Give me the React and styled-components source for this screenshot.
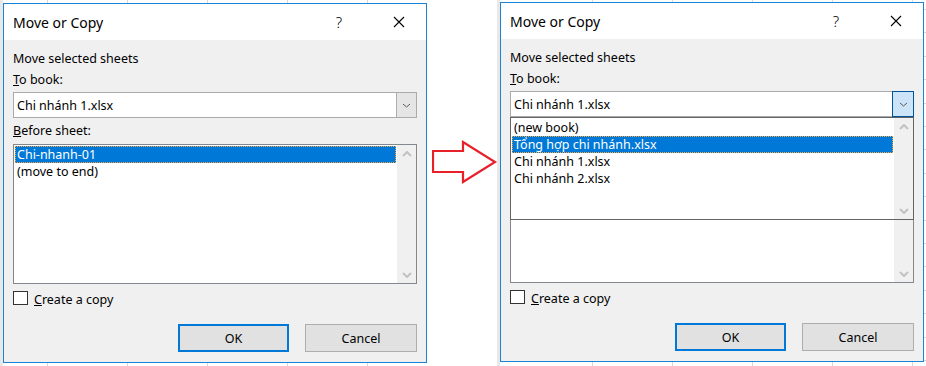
import React from "react";
import styled, { createGlobalStyle } from "styled-components";

const GlobalStyle = createGlobalStyle`
  body {
    margin: 0;
    background: #ffffff;
    font-family: "Noto Sans", "Liberation Sans", sans-serif;
  }
`;

const Page = styled.div`
  display: flex;
  width: 926px;
  height: 366px;
  overflow: hidden;
  background: #ffffff;
`;

// the strip of Excel grid that shows behind each dialog
const Shot = styled.div`
  width: ${(p) => p.$width}px;
  height: 366px;
  padding: ${(p) => p.$top}px 0 0 3px;
  box-sizing: border-box;
  background-color: #ffffff;
  background-image:
    repeating-linear-gradient(to right, transparent 0 47px, #d8d8d8 47px 48px, transparent 48px 80px),
    repeating-linear-gradient(to bottom, transparent 0 9px, #d8d8d8 9px 10px, transparent 10px 23.4px);
  background-position: ${(p) => p.$gx}px 0, 0 0;
  box-shadow: ${(p) => (p.$edge ? "inset 3px 0 0 #e8e8e8" : "none")};
`;

const Gap = styled.div`
  width: 70px;
  padding: 140px 0 0 5px;
  box-sizing: border-box;
`;

const Dialog = styled.div`
  width: 424px;
  border: 1px solid #1883d7;
  background: #f0f0f0;
  box-sizing: border-box;
  display: flex;
  flex-direction: column;
  color: #000;
`;

const TitleBar = styled.div`
  height: 36px;
  background: #ffffff;
  display: flex;
  align-items: center;
  padding: 0 17px 0 9px;
  font-size: 14px;
`;

const Title = styled.div`
  flex: 1;
`;

const TitleButton = styled.div`
  width: 20px;
  height: 20px;
  display: flex;
  align-items: center;
  justify-content: center;
  font-size: 15px;
  font-weight: 300;
  margin-left: ${(p) => p.$gap || 0}px;
`;

const Body = styled.div`
  padding: 10px 9px 10px 9px;
  font-size: 12.5px;
  display: flex;
  flex-direction: column;
`;

const Label = styled.div`
  height: 16px;
  line-height: 18px;
  margin-top: ${(p) => p.$mt || 0}px;
  white-space: nowrap;
  visibility: ${(p) => (p.$hidden ? "hidden" : "visible")};
`;

const ComboWrap = styled.div`
  position: relative;
  margin-top: 5px;
  z-index: 2;
`;

const Combo = styled.div`
  height: 26px;
  box-sizing: border-box;
  border: 1px solid #ababab;
  background: #ffffff;
  display: flex;
  align-items: stretch;
`;

const ComboText = styled.div`
  flex: 1;
  padding-left: 3px;
  line-height: 25px;
`;

const DropButton = styled.div`
  width: 20px;
  display: flex;
  align-items: center;
  justify-content: center;
  box-sizing: border-box;
  background: ${(p) => (p.$active ? "#cce4f7" : "#e5e5e5")};
  border-left: 1px solid #adadad;
  ${(p) =>
    p.$active &&
    `
    margin: -1px -1px -1px 0;
    width: 22px;
    border: 1px solid #005499;
  `}
`;

const DropList = styled.div`
  position: absolute;
  top: 26px;
  left: 0;
  right: 0;
  height: 103px;
  box-sizing: border-box;
  border: 1px solid #646464;
  background: #ffffff;
  display: flex;
`;

const ListBox = styled.div`
  margin-top: 6px;
  height: 140px;
  box-sizing: border-box;
  border: 1px solid #828790;
  background: #ffffff;
  display: flex;
`;

const Items = styled.div`
  flex: 1;
  padding: 1px;
`;

const Row = styled.div`
  height: 17px;
  line-height: 18px;
  padding-left: 2px;
  white-space: nowrap;
  background: ${(p) => (p.$selected ? "#0078d7" : "transparent")};
  color: ${(p) => (p.$selected ? "#ffffff" : "#000000")};
  outline: ${(p) => (p.$selected ? "1px dotted #f5a742" : "none")};
  outline-offset: -1px;
`;

const ScrollBar = styled.div`
  width: 19px;
  background: #f0f0f0;
  display: flex;
  flex-direction: column;
  justify-content: space-between;
  align-items: center;
  padding: 6px 0 5px;
  box-sizing: border-box;
`;

const CheckRow = styled.div`
  display: flex;
  align-items: center;
  margin-top: 7px;
  height: 14px;
  gap: 6px;
`;

const CheckLabel = styled.span`
  line-height: 16px;
  padding-top: 3px;
`;

const CheckBox = styled.div`
  width: 15px;
  height: 14px;
  box-sizing: border-box;
  border: 1px solid #333333;
  background: #ffffff;
`;

const ButtonRow = styled.div`
  display: flex;
  justify-content: flex-end;
  gap: 16px;
  margin-top: 19px;
`;

const Button = styled.div`
  width: ${(p) => (p.$primary ? 111 : 112)}px;
  height: 28px;
  box-sizing: border-box;
  border: ${(p) => (p.$primary ? "2px solid #0078d7" : "1px solid #adadad")};
  background: #e1e1e1;
  display: flex;
  align-items: center;
  justify-content: center;
`;

const Chevron = ({ up, color = "#c2c2c2", w = 10, h = 6, sw = 2 }) => (
  <svg width={w} height={h} viewBox={`0 0 ${w} ${h}`}>
    <polyline
      points={up ? `1,${h - 1} ${w / 2},1 ${w - 1},${h - 1}` : `1,1 ${w / 2},${h - 1} ${w - 1},1`}
      fill="none"
      stroke={color}
      strokeWidth={sw}
    />
  </svg>
);

const CloseIcon = () => (
  <svg width="12" height="12" viewBox="0 0 12 12">
    <path d="M1 1 L11 11 M11 1 L1 11" stroke="#000" strokeWidth="1.1" fill="none" />
  </svg>
);

const Arrow = () => (
  <svg width="66" height="44" viewBox="0 0 66 44">
    <polygon
      points="1,11 31,11 31,2 63,22 31,42 31,32 1,32"
      fill="#ffffff"
      stroke="#e8202a"
      strokeWidth="2.2"
      strokeLinejoin="miter"
    />
  </svg>
);

const books = ["(new book)", "Tổng hợp chi nhánh.xlsx", "Chi nhánh 1.xlsx", "Chi nhánh 2.xlsx"];

function MoveCopyDialog({ open }) {
  return (
    <Dialog>
      <TitleBar>
        <Title>Move or Copy</Title>
        <TitleButton>?</TitleButton>
        <TitleButton $gap={40}>
          <CloseIcon />
        </TitleButton>
      </TitleBar>
      <Body>
        <Label>Move selected sheets</Label>
        <Label $mt={5}>
          <u>T</u>o book:
        </Label>
        <ComboWrap>
          <Combo>
            <ComboText>Chi nhánh 1.xlsx</ComboText>
            <DropButton $active={open}>
              <Chevron color="#5a5a5a" w={9} h={5} sw={1} />
            </DropButton>
          </Combo>
          {open && (
            <DropList>
              <Items>
                {books.map((b, i) => (
                  <Row key={b} $selected={i === 1}>
                    {b}
                  </Row>
                ))}
              </Items>
              <ScrollBar>
                <Chevron up />
                <Chevron />
              </ScrollBar>
            </DropList>
          )}
        </ComboWrap>
        {/* under the open drop-down this label is covered */}
        <Label $mt={4} $hidden={open}>
          <u>B</u>efore sheet:
        </Label>
        <ListBox>
          <Items>
            {!open && (
              <>
                <Row $selected>Chi-nhanh-01</Row>
                <Row>(move to end)</Row>
              </>
            )}
          </Items>
          <ScrollBar>
            <Chevron up />
            <Chevron />
          </ScrollBar>
        </ListBox>
        <CheckRow>
          <CheckBox />
          <CheckLabel>
            <u>C</u>reate a copy
          </CheckLabel>
        </CheckRow>
        <ButtonRow>
          <Button $primary>OK</Button>
          <Button>Cancel</Button>
        </ButtonRow>
      </Body>
    </Dialog>
  );
}

export default function App() {
  return (
    <>
      <GlobalStyle />
      <Page>
        <Shot $width={427} $top={3} $gx={0} $edge>
          <MoveCopyDialog />
        </Shot>
        <Gap>
          <Arrow />
        </Gap>
        <Shot $width={429} $top={2} $gx={48} $edge>
          <MoveCopyDialog open />
        </Shot>
      </Page>
    </>
  );
}
